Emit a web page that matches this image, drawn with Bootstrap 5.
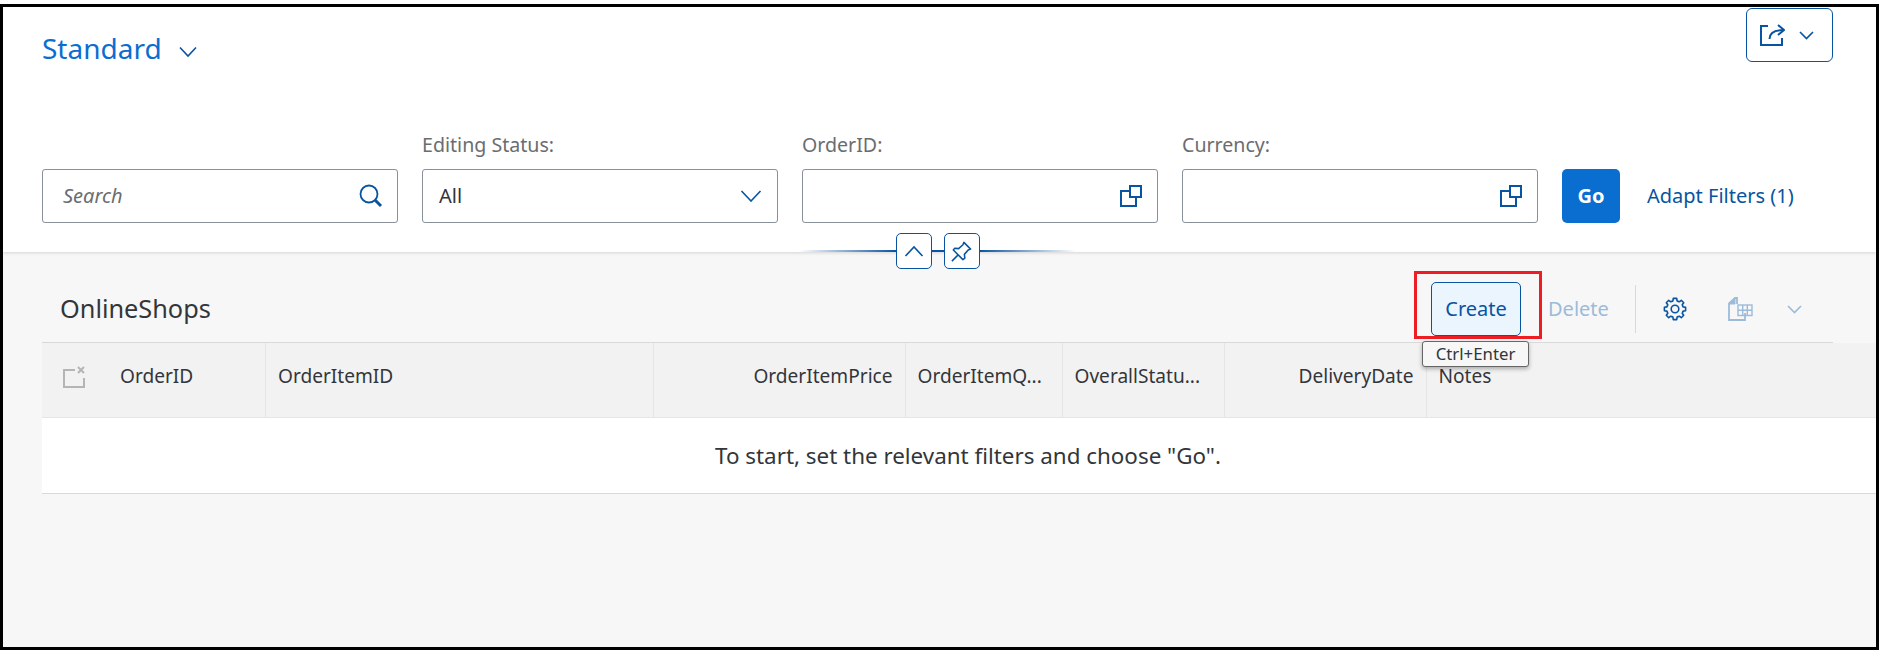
<!DOCTYPE html>
<html lang="en">
<head>
  <meta charset="UTF-8" />
  <meta name="viewport" content="width=device-width, initial-scale=1" />
  <title>OnlineShops</title>
  <link href="https://cdn.jsdelivr.net/npm/bootstrap@5.3.0/dist/css/bootstrap.min.css" rel="stylesheet" />
  <style>
    body { background: #fff; font-family: "Noto Sans", "Open Sans", sans-serif; font-size: 20px; color: #32363a; overflow: hidden; }
    svg { display: block; fill: none; stroke: #0854a0; stroke-width: 1.6; flex: none; }

    .shot-frame { width: 1879px; margin-top: 4px; height: 646px; border: 3px solid #000; background: #f7f7f7; }

    /* filter bar */
    .filter-panel { position: relative; z-index: 1; height: 245px; padding: 1px 43px 29px 39px; background: #fff; box-shadow: 0 1px 3px rgba(0, 0, 0, .14); }
    .variant-name { margin-top: 16px; font-size: 28px; line-height: 48px; color: #0a6ed1; }
    .variant-name svg { margin-top: 7px; }
    .share-btn { width: 87px; height: 54px; padding: 0 18px 0 13px; border: 1px solid #0854a0; border-radius: 6px; background: #fff; }
    .filter-row { gap: 24px; }
    .filter-field { width: 356px; }
    .filter-label { margin-bottom: 12px; line-height: 24px; font-size: 19.6px; color: #6a6d70; }
    .field-box { height: 54px; padding: 0 15px 0 16px; border: 1px solid #89919a; border-radius: 3px; background: #fff; }
    .search-box { padding-right: 14px; }
    .field-box .form-control { padding: 0; border: 0; box-shadow: none; background: transparent; font-size: 20px; }
    .field-box .form-control::placeholder { font-style: italic; color: #6a6d70; }
    .search-input { margin-left: 4px; }
    .go-btn { width: 58px; height: 54px; padding: 0; border: 0; border-radius: 5px; background: #0a6ed1; color: #fff; font-size: 20px; font-weight: 700; }
    .go-btn:hover { background: #0a6ed1; color: #fff; }
    .adapt-link { height: 54px; margin-left: 3px; line-height: 54px; font-size: 20px; color: #0854a0; text-decoration: none; white-space: nowrap; }

    /* collapse and pin buttons that sit on the panel edge */
    .edge-tools { position: absolute; left: 796px; bottom: -17px; width: 277px; height: 36px; gap: 12px; }
    .edge-tools::before { content: ""; position: absolute; left: 0; right: 0; top: 17px; height: 2px; background: linear-gradient(90deg, transparent, #0854a0 35%, #0854a0 65%, transparent); }
    .edge-btn { position: relative; width: 36px; height: 36px; padding: 0; border: 1px solid #0854a0; border-radius: 5px; background: #fff; }

    /* table toolbar */
    .table-bar { height: 91px; margin: 0 43px 0 39px; padding: 19px 31px 3px 18px; border-bottom: 1px solid #d9d9d9; }
    .table-title { margin-top: 8px; font-size: 25.3px; }
    .create-mark { position: relative; height: 68px; padding: 8px 18px 0 14px; border: 3px solid #ee1c25; }
    .create-btn { width: 90px; height: 54px; padding: 0; border: 1px solid #0854a0; border-radius: 5px; background: #ebf5fe; color: #0854a0; font-size: 20px; }
    .create-btn:hover { background: #ebf5fe; color: #0854a0; }
    .key-hint { position: absolute; left: 5px; top: 67px; z-index: 2; width: 107px; height: 26px; border: 1px solid #666; border-radius: 3px; background: #f7f7f7; box-shadow: 0 2px 4px rgba(0, 0, 0, .3); font-size: 16.8px; line-height: 24px; text-align: center; color: #32363a; }
    .tool-item { height: 54px; margin-bottom: 3px; }
    .delete-item { width: 59px; margin-left: 6px; font-size: 20px; color: #9cbbd9; }
    .tool-sep { width: 1px; height: 48px; margin: 0 0 6px 28px; background: #d9d9d9; }
    .gear-item { margin-left: 27px; }
    .sheet-item { margin-left: 41px; }
    .caret-item { margin-left: 34px; }
    .dim-icon { stroke: #9cbbd9; }

    /* table */
    .orders-wrap { margin-left: 39px; }
    .orders-grid { table-layout: fixed; width: 1834px; margin: 0; --bs-table-bg: transparent; }
    .orders-grid th { height: 74px; padding: 0 12px 6px 12px; border-bottom: 1px solid #e5e5e5; border-right: 1px solid #e5e5e5; background: #f2f2f2; font-weight: 400; font-size: 19.1px; color: #32363a; vertical-align: middle; white-space: nowrap; overflow: hidden; }
    .orders-grid th:last-child { border-right: 0; }
    .orders-grid th.select-cell { padding-left: 21px; }
    .orders-grid td { height: 76px; padding: 2px 0 0 18px; border-bottom: 1px solid #d9d9d9; background: #fff; font-size: 22.4px; text-align: center; vertical-align: middle; color: #32363a; }
    .select-all { gap: 35px; }
    .select-all svg { stroke: #b5b5b5; stroke-width: 2; margin-top: 1px; }
    .col-a { width: 223.5px; }
    .col-b { width: 388px; }
    .col-c { width: 251.5px; }
    .col-d { width: 157px; }
    .col-e { width: 162px; }
    .col-f { width: 202px; }
  </style>
</head>
<body>

<div class="shot-frame">
  <svg width="0" height="0" class="position-absolute">
    <defs>
      <path id="gearTooth" d="M-3.3-7.6L-2.1-8.1L-1.7-10.6H1.7L2.1-8.1L3.3-7.6" />
    </defs>
  </svg>

  <section class="filter-panel d-flex flex-column justify-content-between">
    <div class="d-flex justify-content-between align-items-start">
      <div class="variant-name d-flex align-items-center gap-3">
        Standard
        <svg width="20" height="12" viewBox="0 0 20 12"><path d="M2 1.5l8 8.500 8-8.500" /></svg>
      </div>
      <button class="share-btn d-flex align-items-center justify-content-between" type="button">
        <svg width="25" height="22" viewBox="0 0 25 22" stroke-width="2">
          <path d="M8 2H1v19h21v-7" stroke-width="2" />
          <path d="M9.500 15c0-6 5-9 14-9" stroke-width="2" />
          <path d="M18 1l6 5-6 5" stroke-width="2" />
        </svg>
        <svg width="15" height="9" viewBox="0 0 15 9"><path d="M1 1l6.500 6.500L14 1" /></svg>
      </button>
    </div>

    <form class="filter-row d-flex align-items-end">
      <div class="filter-field">
        <div class="field-box search-box d-flex align-items-center">
          <input class="form-control search-input" type="text" placeholder="Search" />
          <svg width="24" height="24" viewBox="0 0 24 24">
            <circle cx="10" cy="10" r="8.500" stroke-width="1.800" />
            <path d="M16 16l6 6" stroke-width="3" />
          </svg>
        </div>
      </div>
      <div class="filter-field">
        <div class="filter-label">Editing Status:</div>
        <div class="field-box d-flex align-items-center justify-content-between">
          <span>All</span>
          <svg width="22" height="12" viewBox="0 0 22 12"><path d="M1.500 1l9.500 10 9.500-10" /></svg>
        </div>
      </div>
      <div class="filter-field">
        <div class="filter-label">OrderID:</div>
        <div class="field-box d-flex align-items-center justify-content-end">
          <svg width="22" height="22" viewBox="0 0 22 22">
            <path d="M10 6H1v15h15v-9" stroke-width="2" />
            <rect x="10" y="1" width="11" height="11" stroke-width="2" />
          </svg>
        </div>
      </div>
      <div class="filter-field">
        <div class="filter-label">Currency:</div>
        <div class="field-box d-flex align-items-center justify-content-end">
          <svg width="22" height="22" viewBox="0 0 22 22">
            <path d="M10 6H1v15h15v-9" stroke-width="2" />
            <rect x="10" y="1" width="11" height="11" stroke-width="2" />
          </svg>
        </div>
      </div>
      <button class="go-btn btn" type="button">Go</button>
      <a class="adapt-link" href="#">Adapt Filters (1)</a>
    </form>

    <div class="edge-tools d-flex justify-content-center">
      <button class="edge-btn d-flex align-items-center justify-content-center" type="button">
        <svg width="20" height="12" viewBox="0 0 20 12"><path d="M1.500 11l8.500-9 8.500 9" /></svg>
      </button>
      <button class="edge-btn d-flex align-items-center justify-content-center" type="button">
        <svg width="23" height="23" viewBox="0 0 24 24" stroke-width="1.800">
          <path d="M14.500 2.500L21.500 9.500L19 10.500L15 15L15.500 19L13.500 20.500L3.500 10.500L5 8.500L9 9L13.500 5Z" stroke-linejoin="round" />
          <path d="M8.500 15.500L2 22" />
        </svg>
      </button>
    </div>
  </section>

  <section>
    <div class="table-bar d-flex justify-content-between align-items-center">
      <div class="table-title">OnlineShops</div>
      <div class="d-flex align-items-end">
        <div class="create-mark">
          <button class="create-btn btn" type="button">Create</button>
          <div class="key-hint">Ctrl+Enter</div>
        </div>
        <div class="tool-item delete-item d-flex align-items-center">Delete</div>
        <div class="tool-sep"></div>
        <div class="tool-item gear-item d-flex align-items-center">
          <svg width="24" height="24" viewBox="-12 -12 24 24" stroke-width="1.700" stroke-linejoin="round">
            <circle r="3.800" />
            <use href="#gearTooth" />
            <use href="#gearTooth" transform="rotate(45)" />
            <use href="#gearTooth" transform="rotate(90)" />
            <use href="#gearTooth" transform="rotate(135)" />
            <use href="#gearTooth" transform="rotate(180)" />
            <use href="#gearTooth" transform="rotate(225)" />
            <use href="#gearTooth" transform="rotate(270)" />
            <use href="#gearTooth" transform="rotate(315)" />
          </svg>
        </div>
        <div class="tool-item sheet-item d-flex align-items-center">
          <svg class="dim-icon" width="25" height="24" viewBox="0 0 25 24">
            <path d="M9 7V1H7L1 6.500V23h16v-7" stroke-width="1.800" />
            <path d="M1 7h6V1z" fill="#9cbbd9" stroke-width="1" />
            <rect x="10" y="8" width="14" height="10.500" stroke-width="1.400" />
            <path d="M10 13.200h14M14.700 8v10.500M19.300 8v10.500" stroke-width="1.400" />
          </svg>
        </div>
        <div class="tool-item caret-item d-flex align-items-center">
          <svg class="dim-icon" width="15" height="9" viewBox="0 0 15 9"><path d="M1 1l6.500 6.500L14 1" /></svg>
        </div>
      </div>
    </div>

    <div class="orders-wrap">
      <table class="orders-grid table">
        <colgroup>
          <col class="col-a" /><col class="col-b" /><col class="col-c" /><col class="col-d" /><col class="col-e" /><col class="col-f" /><col />
        </colgroup>
        <thead>
          <tr>
            <th class="select-cell">
              <div class="select-all d-flex align-items-center">
                <svg width="22" height="22" viewBox="0 0 22 22">
                  <path d="M12 4H1v17h20v-9" />
                  <path d="M15 1l6 6M21 1l-6 6" />
                </svg>
                OrderID
              </div>
            </th>
            <th>OrderItemID</th>
            <th class="text-end">OrderItemPrice</th>
            <th>OrderItemQ...</th>
            <th>OverallStatu...</th>
            <th class="text-end">DeliveryDate</th>
            <th>Notes</th>
          </tr>
        </thead>
        <tbody>
          <tr><td colspan="7">To start, set the relevant filters and choose "Go".</td></tr>
        </tbody>
      </table>
    </div>
  </section>
</div>

<script src="https://cdn.jsdelivr.net/npm/bootstrap@5.3.0/dist/js/bootstrap.bundle.min.js"></script>
</body>
</html>
